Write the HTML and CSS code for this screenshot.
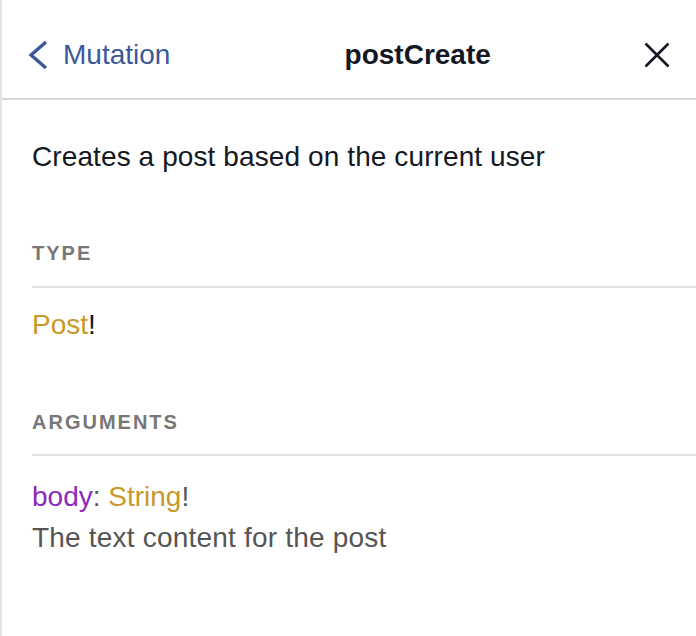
FILE: index.html
```html
<!DOCTYPE html>
<html>
<head>
<meta charset="utf-8">
<link rel="stylesheet" href="styles.css">
</head>
<body>
<div class="panel">
  <div class="header">
    <div class="back">
      <svg class="chev" width="19" height="30" viewBox="0 0 19 30"><polyline points="17,2 2,15 17,28" fill="none" stroke="#3b5998" stroke-width="3.4" stroke-linecap="butt" stroke-linejoin="miter"/></svg>
      <span>Mutation</span>
    </div>
    <div class="title">postCreate</div>
    <div class="close">
      <svg width="26" height="26" viewBox="0 0 26 26"><path d="M1.5 1.5 L24.5 24.5 M24.5 1.5 L1.5 24.5" stroke="#141823" stroke-width="2.6" fill="none"/></svg>
    </div>
  </div>
  <div class="contents">
    <div class="desc">Creates a post based on the current user</div>
    <div class="cat-title type-title">Type</div>
    <div class="type-line"><span class="type-name">Post</span><span class="bang">!</span></div>
    <div class="cat-title args-title">Arguments</div>
    <div class="arg">
      <div class="arg-sig"><span class="arg-name">body</span><span class="punct">: </span><span class="type-name">String</span><span class="punct">!</span></div>
      <div class="arg-desc">The text content for the post</div>
    </div>
  </div>
</div>
</body>
</html>
```

FILE: styles.css
```css
html, body {
  margin: 0;
  padding: 0;
  background: #ffffff;
}
body {
  font-family: "Liberation Sans", Arial, sans-serif;
  color: #141823;
}
.panel {
  border-left: 2px solid #e4e4e4;
  min-height: 636px;
  box-sizing: border-box;
}
.header {
  display: flex;
  align-items: flex-start;
  height: 100px;
  box-sizing: border-box;
  padding-top: 35px;
  border-bottom: 2px solid #d8d8d8;
}
.back {
  display: flex;
  align-items: center;
  height: 40px;
  padding: 0 24px 0 27px;
  color: #3b5998;
  font-size: 28px;
  gap: 15px;
  white-space: nowrap;
}
.chev {
  display: block;
}
.title {
  flex: 1;
  height: 40px;
  line-height: 40px;
  padding-left: 20px;
  text-align: center;
  font-weight: bold;
  font-size: 28px;
  color: #141823;
  white-space: nowrap;
}
.close {
  display: flex;
  align-items: center;
  height: 40px;
  padding: 0 26px 0 23px;
}
.close svg {
  display: block;
}
.contents {
  padding: 37px 0 0 30px;
}
.desc {
  font-size: 28px;
  line-height: 40px;
  letter-spacing: 0.1px;
  color: #141823;
}
.cat-title {
  font-size: 20px;
  line-height: 28px;
  font-weight: bold;
  text-transform: uppercase;
  letter-spacing: 2px;
  color: #777777;
  padding-bottom: 19px;
  border-bottom: 2px solid #e0e0e0;
}
.type-title {
  margin-top: 62px;
}
.args-title {
  margin-top: 63px;
  padding-bottom: 18px;
}
.type-line {
  margin-top: 17px;
  font-size: 28px;
  line-height: 40px;
}
.type-name {
  color: #c9982b;
}
.bang {
  color: #141823;
}
.arg {
  margin-top: 21px;
  font-size: 28px;
  line-height: 40px;
}
.arg-name {
  color: #8b2bb9;
}
.punct {
  color: #555555;
}
.arg-desc {
  margin-top: 1px;
  letter-spacing: 0.2px;
  color: #555555;
}
```
